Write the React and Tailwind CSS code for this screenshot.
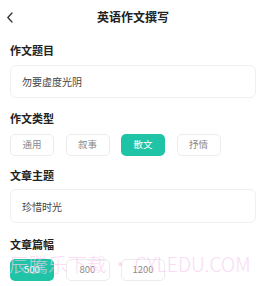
import { useState } from 'react';

const types = ['通用', '叙事', '散文', '抒情'];
const lengths = ['500', '800', '1200'];

function Chip({ label, active, onClick }) {
  return (
    <button
      type="button"
      onClick={onClick}
      className={
        active
          ? 'h-[22px] w-[44px] rounded-[5px] bg-[#1fc4a6] text-[9.5px] leading-none text-white'
          : 'h-[22px] w-[44px] rounded-[5px] border border-[#ececec] bg-white text-[9.5px] leading-none text-[#8a8a8a]'
      }
    >
      {label}
    </button>
  );
}

function Label({ children, className }) {
  return (
    <div className={'text-[11px] font-semibold leading-[14px] text-[#222] ' + (className || '')}>
      {children}
    </div>
  );
}

export default function App() {
  const [type, setType] = useState('散文');
  const [len, setLen] = useState('500');

  return (
    <div
      className="relative h-[286px] w-[259px] overflow-hidden bg-white pl-[10px] pr-[3px]"
      style={{ fontFamily: '"Noto Sans CJK SC", "Noto Sans", sans-serif' }}
    >
      <div className="relative flex h-[34px] items-center justify-center">
        <svg
          className="absolute left-[-4px] top-[12px]"
          width="8"
          height="11"
          viewBox="0 0 8 11"
          fill="none"
          stroke="#333"
          strokeWidth="1.3"
          strokeLinecap="round"
          strokeLinejoin="round"
        >
          <path d="M6 1 L1.8 5.5 L6 10" />
        </svg>
        <div className="text-[12px] font-semibold text-[#222]">英语作文撰写</div>
      </div>

      <Label className="mt-[9px]">作文题目</Label>
      <div className="mt-[8px] flex h-[33px] items-center rounded-[6px] border border-[#efefef] px-[11px] text-[10px] text-[#444]">
        勿要虚度光阴
      </div>

      <Label className="mt-[13px]">作文类型</Label>
      <div className="mt-[9px] flex gap-[11.5px]">
        {types.map((t) => (
          <Chip key={t} label={t} active={t === type} onClick={() => setType(t)} />
        ))}
      </div>

      <Label className="mt-[12px]">文章主题</Label>
      <div className="mt-[7px] flex h-[34px] items-center rounded-[6px] border border-[#efefef] px-[11px] text-[10px] text-[#444]">
        珍惜时光
      </div>

      <Label className="mt-[14px]">文章篇幅</Label>
      <div className="mt-[8px] flex gap-[11.5px]">
        {lengths.map((l) => (
          <Chip key={l} label={l} active={l === len} onClick={() => setLen(l)} />
        ))}
      </div>

      {/* watermark */}
      <div className="pointer-events-none absolute left-[9px] top-[254px] whitespace-nowrap text-[19.5px] font-light leading-[20px] text-[#f7cdf0] opacity-70">
        辰騰乐下载 • CYLEDU.COM
      </div>
    </div>
  );
}
